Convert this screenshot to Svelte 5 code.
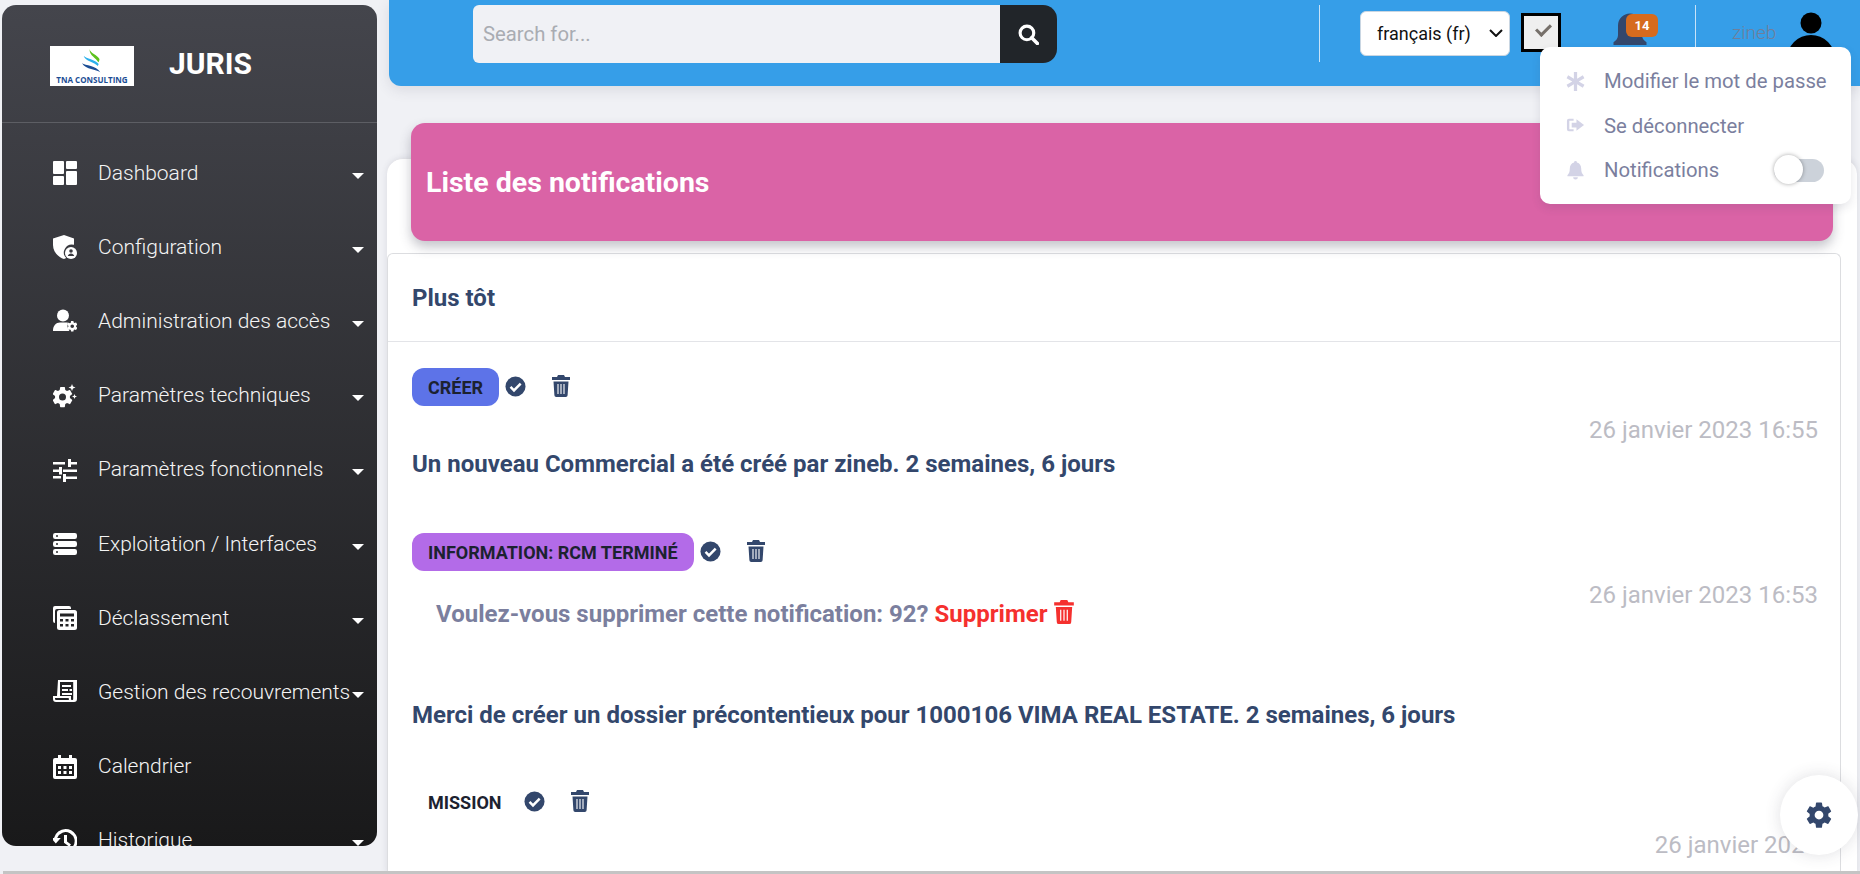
<script>
  const menu = [
    { label: "Dashboard", icon: "dashboard", caret: true },
    { label: "Configuration", icon: "shield", caret: true },
    { label: "Administration des accès", icon: "usercog", caret: true },
    { label: "Paramètres techniques", icon: "gears", caret: true },
    { label: "Paramètres fonctionnels", icon: "tune", caret: true },
    { label: "Exploitation / Interfaces", icon: "server", caret: true },
    { label: "Déclassement", icon: "calc", caret: true },
    { label: "Gestion des recouvrements", icon: "receipt", caret: true },
    { label: "Calendrier", icon: "calendar", caret: false },
    { label: "Historique", icon: "history", caret: true }
  ];

  const gear =
    "M19.4 13c.04-.33.06-.66.06-1s-.02-.67-.07-1l2.15-1.66c.2-.15.25-.42.12-.64l-2.03-3.5c-.12-.22-.39-.3-.61-.22l-2.53 1.02c-.53-.4-1.1-.74-1.72-.99l-.38-2.68A.5.5 0 0 0 13.9 2h-3.8a.5.5 0 0 0-.5.43l-.38 2.68c-.62.25-1.19.6-1.72.99L4.97 5.08c-.22-.09-.49 0-.61.22L2.33 8.8c-.13.22-.07.49.12.64L4.6 11.1c-.05.33-.08.67-.08.99s.02.67.07 1l-2.15 1.66c-.2.15-.25.42-.12.64l2.03 3.5c.12.22.39.3.61.22l2.53-1.02c.53.4 1.1.74 1.72.99l.38 2.68c.05.24.26.43.5.43h3.8c.24 0 .45-.19.5-.43l.38-2.68c.62-.25 1.19-.6 1.72-.99l2.53 1.02c.22.09.49 0 .61-.22l2.03-3.5c.13-.22.07-.49-.12-.64L19.4 13zM12 15.5a3.5 3.5 0 1 1 0-7 3.5 3.5 0 0 1 0 7z";
</script>

{#snippet trash(cls)}
  <svg class="trash {cls}" viewBox="0 0 18 22" aria-hidden="true">
    <path d="M6 0h6l1 2h5v3H0V2h5zM1.500 6.500h15L15.600 20.300A1.800 1.800 0 0 1 13.800 22H4.200a1.800 1.800 0 0 1-1.800-1.700z" fill="currentColor" />
    <path d="M6 9v10M9 9v10M12 9v10" stroke="#fff" stroke-width="1.100" />
  </svg>
{/snippet}

{#snippet check()}
  <svg class="check" viewBox="0 0 22 22" aria-hidden="true">
    <circle cx="11" cy="11" r="10.500" fill="#33476c" />
    <path d="M5.800 11.500l3.600 3.600 7-7.200" fill="none" stroke="#fff" stroke-width="2.600" />
  </svg>
{/snippet}

{#snippet menuIcon(name)}
  <svg class="micon" viewBox="0 0 24 24" fill="#fff" aria-hidden="true">
    {#if name === "dashboard"}
      <rect x="0" y="0" width="11" height="13" rx="1" /><rect x="13" y="0" width="11" height="8" rx="1" /><rect x="0" y="15" width="11" height="9" rx="1" /><rect x="13" y="10" width="11" height="14" rx="1" />
    {:else if name === "shield"}
      <path d="M11 0l10 3.600v6.200a8 8 0 0 0-7.800 13.300L11 24C5 22 0 17 0 10V3.600z" />
      <circle cx="18" cy="18" r="6" />
      <circle cx="18" cy="16" r="1.800" fill="#3a3a40" />
      <path d="M14.800 21c.4-1.800 1.700-2.600 3.200-2.600s2.800.8 3.200 2.600z" fill="#3a3a40" />
    {:else if name === "usercog"}
      <circle cx="10" cy="6.500" r="6" />
      <path d="M0 22c0-5.500 3-8.500 7-8.500h6c.8 0 1.400.1 2 .3-.6 1.200-.8 2.600-.5 3.900.2 1.600 1 3 2 4.300z" />
      <g transform="translate(13 11) scale(.52)"><path d={gear} /></g>
    {:else if name === "gears"}
      <g transform="translate(-2.500 1) scale(1)"><path d={gear} /></g>
      <path d="M19 0l1 2.500 2.500 1-2.500 1-1 2.500-1-2.500-2.500-1 2.500-1zM21.500 10l.7 1.800 1.800.7-1.800.7-.7 1.800-.7-1.800-1.800-.7 1.800-.7z" />
    {:else if name === "tune"}
      <path d="M0 18h8v2.500H0zM0 4h12v2.500H0zM13 24v-3h11v-2.500H13V16h-3v8zM6 9v2.500H0V14h6v2.500h3V9zM24 14v-2.500H10V14zM15 9h3V6.500h6V4h-6V1h-3z" />
    {:else if name === "server"}
      <rect x="0" y="1" width="24" height="6" rx="2.200" /><rect x="0" y="9" width="24" height="6" rx="2.200" /><rect x="0" y="17" width="24" height="6" rx="2.200" />
      <circle cx="4" cy="4" r="1" fill="#2b2b2e" /><circle cx="4" cy="12" r="1" fill="#2b2b2e" /><circle cx="4" cy="20" r="1" fill="#2b2b2e" />
    {:else if name === "calc"}
      <path d="M2 0h14a2 2 0 0 1 2 2v1H4a2 2 0 0 0-2 2v12H2a2 2 0 0 1-2-2V2a2 2 0 0 1 2-2z" />
      <rect x="4" y="4" width="20" height="20" rx="2.500" />
      <rect x="7" y="7.500" width="14" height="3" fill="#242426" />
      <g fill="#242426"><rect x="7" y="13" width="3" height="2.500" /><rect x="12.500" y="13" width="3" height="2.500" /><rect x="18" y="13" width="3" height="2.500" /><rect x="7" y="18" width="3" height="2.500" /><rect x="12.500" y="18" width="3" height="2.500" /><rect x="18" y="18" width="3" height="2.500" /></g>
    {:else if name === "receipt"}
      <path d="M5 0h19v19a3 3 0 0 1-3 3H3a3 3 0 0 1-3-3v-3h4zM7 2v14h11v3a1 1 0 0 0 1.200 1c.5 0 1-.4 1-1V2zM2 18v1a1.200 1.200 0 0 0 1 1h13a3 3 0 0 1-.2-2z" fill-rule="evenodd" />
      <path d="M9 5h9v2H9zM9 9h6v2H9zM16.500 9H19v2h-2.500zM9 13h10v2H9z" />
    {:else if name === "calendar"}
      <path d="M5 0h3v3h8V0h3v3h3a2 2 0 0 1 2 2v17a2 2 0 0 1-2 2H2a2 2 0 0 1-2-2V5a2 2 0 0 1 2-2h3zM3 9v12h18V9z" fill-rule="evenodd" />
      <path d="M5 11h3v3H5zM10.500 11h3v3h-3zM16 11h3v3h-3zM5 16h3v3H5zM10.500 16h3v3h-3zM16 16h3v3h-3z" />
    {:else if name === "history"}
      <path d="M12.500 0A12 12 0 1 1 4.400 20.800l2-2.200a9 9 0 1 0-2.200-9.600h3.600l-5 5.500L-2 9h3a12 12 0 0 1 11.500-9z" />
      <path d="M11 6h3v6.500l4 3-1.700 2.200-5.300-4z" />
    {/if}
  </svg>
{/snippet}

<div class="page">
  <aside class="sidebar">
    <div class="brand">
      <div class="logo">
        <svg class="leaf" viewBox="0 0 24 30" aria-hidden="true">
          <path d="M9 0c1 5 9 7 12 12-.2 2-.5 3-1.500 4C17 10 9 9 9 0z" fill="#5cc21e" />
          <path d="M2 8c3 4 14 4 18 10l-1 2.500C15 15 4 15 2 8z" fill="#2cb1ec" />
          <path d="M0 17c4 3 17 2 22 11-5-4-17-3-22-11z" fill="#1b4d94" />
        </svg>
        <span class="logo-text">TNA CONSULTING</span>
      </div>
      <span class="brand-name">JURIS</span>
    </div>
    <nav class="menu">
      {#each menu as item}
        <div class="menu-item">
          {@render menuIcon(item.icon)}
          <span class="menu-label">{item.label}</span>
          {#if item.caret}<span class="caret"></span>{/if}
        </div>
      {/each}
    </nav>
  </aside>

  <div class="main">
    <header class="topbar">
      <div class="search">
        <input type="text" placeholder="Search for..." />
        <button class="search-btn" aria-label="Rechercher">
          <svg viewBox="0 0 20 20" width="21" height="21" aria-hidden="true">
            <circle cx="8.500" cy="8.500" r="6.500" fill="none" stroke="#fff" stroke-width="3" />
            <path d="M13 13l5.500 5.500" stroke="#fff" stroke-width="3.400" stroke-linecap="round" />
          </svg>
        </button>
      </div>
      <span class="vline first"></span>
      <div class="lang-wrap">
        <select class="lang"><option>français (fr)</option></select>
        <svg class="chevron" viewBox="0 0 14 8" aria-hidden="true"><path d="M1 1l6 6 6-6" fill="none" stroke="#111" stroke-width="2" /></svg>
      </div>
      <input class="box" type="checkbox" checked />
      <div class="bell">
        <svg viewBox="0 0 24 24" width="36" height="36" aria-hidden="true">
          <path d="M12 1a8 8 0 0 0-8 8v6.500c0 2-1.200 3.500-3 4.700V22h22v-1.800c-1.800-1.200-3-2.700-3-4.700V9a8 8 0 0 0-8-8z" fill="#33476c" />
        </svg>
        <span class="badge">14</span>
      </div>
      <span class="vline"></span>
      <span class="user">zineb</span>
      <svg class="avatar" viewBox="0 0 48 74" aria-hidden="true">
        <circle cx="24" cy="11" r="10.500" fill="#000" />
        <ellipse cx="24" cy="47" rx="24" ry="24" fill="#000" />
      </svg>
    </header>

    <div class="outer">
      <div class="banner"><h1>Liste des notifications</h1></div>
      <section class="card">
        <h2 class="card-head">Plus tôt</h2>
        <div class="notif n1">
          <div class="tags">
            <span class="tag blue">CRÉER</span>
            {@render check()}
            {@render trash("")}
          </div>
          <div class="date">26 janvier 2023 16:55</div>
          <p class="msg">Un nouveau Commercial a été créé par zineb. 2 semaines, 6 jours</p>
        </div>
        <div class="notif n2">
          <div class="tags">
            <span class="tag purple">INFORMATION: RCM TERMINÉ</span>
            {@render check()}
            {@render trash("")}
          </div>
          <div class="date">26 janvier 2023 16:53</div>
          <p class="confirm">Voulez-vous supprimer cette notification: 92? <span class="red">Supprimer</span> {@render trash("red")}</p>
          <p class="msg">Merci de créer un dossier précontentieux pour 1000106 VIMA REAL ESTATE. 2 semaines, 6 jours</p>
        </div>
        <div class="notif n3">
          <div class="tags">
            <span class="tag plain">MISSION</span>
            {@render check()}
            {@render trash("")}
          </div>
          <div class="date">26 janvier 2023</div>
          <p class="msg">Merci de créer un dossier précontentieux pour 1000107 VIMA REAL ESTATE. 2 semaines, 6 jours</p>
        </div>
      </section>
    </div>
  </div>

  <!-- user dropdown, lies over the header and banner -->
  <div class="dropdown">
    <div class="dd-row">
      <svg class="dd-icon" viewBox="0 0 20 20" aria-hidden="true"><path d="M8.300 0h3.400v7l6-3.500 1.700 3L13.400 10l6 3.500-1.700 3-6-3.500v7H8.300v-7l-6 3.500-1.700-3L6.600 10l-6-3.500 1.700-3 6 3.500z" /></svg>
      <span>Modifier le mot de passe</span>
    </div>
    <div class="dd-row">
      <svg class="dd-icon" viewBox="0 0 20 20" aria-hidden="true"><path d="M8 3H3a2 2 0 0 0-2 2v9a2 2 0 0 0 2 2h5v-2H3.500V5H8z" /><path d="M11 3.500l8 6-8 6V12H6V7h5z" /></svg>
      <span>Se déconnecter</span>
    </div>
    <div class="dd-row">
      <svg class="dd-icon" viewBox="0 0 20 20" aria-hidden="true"><path d="M10 0a1.500 1.500 0 0 1 1.500 1.600C14.500 2.300 16 5 16 8c0 4 1 5.500 2.500 7v1h-17v-1C3 13.500 4 12 4 8c0-3 1.500-5.700 4.500-6.400A1.500 1.500 0 0 1 10 0zM7.500 17h5a2.500 2.500 0 0 1-5 0z" /></svg>
      <span>Notifications</span>
      <span class="switch"><span class="knob"></span></span>
    </div>
  </div>

  <button class="settings" aria-label="Paramètres">
    <svg viewBox="0 0 24 24" width="30" height="30" fill="#33476c" aria-hidden="true"><path d={gear} /></svg>
  </button>

  <div class="hbar"></div>
</div>

<style>
  :global(body) {
    margin: 0;
    background: #f0f1f5;
    font-family: Roboto, "Liberation Sans", sans-serif;
  }
  .page {
    position: relative;
    display: flex;
    height: 874px;
    overflow: hidden;
    background: #f0f1f5;
  }
  .sidebar {
    flex: 0 0 375px;
    height: 841px;
    margin: 5px 12px 0 2px;
    border-radius: 14px;
    overflow: hidden;
    background: linear-gradient(180deg, #44454c 0%, #19191a 100%);
    color: #fff;
  }
  .brand {
    display: flex;
    align-items: center;
    gap: 35px;
    height: 118px;
    padding-left: 48px;
    border-bottom: 1px solid #5d5e64;
    box-sizing: border-box;
  }
  .logo {
    display: flex;
    flex-direction: column;
    align-items: center;
    justify-content: flex-end;
    width: 84px;
    height: 40px;
    background: #fff;
    margin-top: 4px;
  }
  .leaf {
    width: 22px;
    height: 25px;
  }
  .logo-text {
    font: 700 8px/12px "Open Sans", sans-serif;
    color: #1b4d94;
    white-space: nowrap;
  }
  .brand-name {
    font-size: 30px;
    font-weight: 700;
  }
  .menu {
    padding-top: 13px;
  }
  .menu-item {
    display: flex;
    align-items: center;
    height: 74.200px;
    padding-left: 51px;
    padding-right: 13px;
    box-sizing: border-box;
  }
  .micon {
    flex: 0 0 auto;
    width: 24px;
    height: 24px;
  }
  .menu-label {
    margin-left: 21px;
    font-size: 21px;
    font-weight: 300;
    color: #f4f4f4;
    white-space: nowrap;
    margin-top: -1px;
  }
  .caret {
    margin-left: auto;
    margin-top: 5px;
    border-left: 6px solid transparent;
    border-right: 6px solid transparent;
    border-top: 6px solid #fff;
  }
  .main {
    flex: 1;
    min-width: 0;
  }
  .topbar {
    display: flex;
    align-items: flex-start;
    height: 86px;
    padding-left: 84px;
    background: #369ee8;
    border-bottom-left-radius: 12px;
    box-sizing: border-box;
    box-shadow: 0 4px 14px rgba(60, 60, 80, 0.12);
  }
  .search {
    display: flex;
    width: 584px;
    height: 58px;
    margin-top: 5px;
  }
  .search input {
    flex: 1;
    min-width: 0;
    border: 0;
    padding: 0 10px;
    font: 400 20.300px Roboto, sans-serif;
    background: #f0f1f5;
    border-radius: 6px 0 0 6px;
  }
  .search input::placeholder {
    color: #a9acb2;
  }
  .search-btn {
    flex: 0 0 57px;
    display: flex;
    align-items: center;
    justify-content: center;
    border: 0;
    padding: 0;
    background: #212529;
    border-radius: 0 14px 14px 0;
  }
  .vline {
    width: 1px;
    height: 57px;
    margin-top: 5px;
    background: #c8e3f8;
  }
  .vline.first {
    margin-left: 262px;
  }
  .lang-wrap {
    position: relative;
    width: 150px;
    height: 45px;
    margin: 11px 0 0 40px;
  }
  .lang {
    appearance: none;
    width: 100%;
    height: 100%;
    padding: 0 16px;
    font: 400 18px Roboto, sans-serif;
    color: #111;
    background: #fff;
    border: 1px solid #c9d6e2;
    border-radius: 6px;
  }
  .chevron {
    position: absolute;
    right: 7px;
    top: 18px;
    width: 14px;
    height: 8px;
    pointer-events: none;
  }
  .box {
    appearance: none;
    position: relative;
    width: 40px;
    height: 39px;
    margin: 13px 0 0 11px;
    border: 3px solid #000;
    background: #efefef;
    box-sizing: border-box;
  }
  .box::after {
    content: "";
    position: absolute;
    left: 12px;
    top: 8px;
    width: 12px;
    height: 6px;
    border-left: 3px solid #76706a;
    border-bottom: 3px solid #76706a;
    transform: rotate(-45deg);
  }
  .bell {
    position: relative;
    width: 36px;
    height: 36px;
    margin: 12px 0 0 51px;
  }
  .badge {
    position: absolute;
    left: 14px;
    top: 2px;
    width: 32px;
    height: 23px;
    border-radius: 6px;
    background: #d66b1e;
    color: #fff;
    font-size: 13px;
    font-weight: 700;
    line-height: 23px;
    text-align: center;
  }
  .vline:not(.first) {
    margin-left: 47px;
  }
  .user {
    margin: 21px 0 0 36px;
    font-size: 19px;
    color: #6f7f9b;
    font-weight: 300;
  }
  .avatar {
    width: 48px;
    height: 74px;
    margin: 12px 0 0 11px;
  }
  .outer {
    position: relative;
    margin: 72px 3px 0 -2px;
    padding-top: 1px;
    background: #fff;
    border-radius: 16px 16px 0 0;
    border-top: 1px solid #e4e4e8;
    box-shadow: 0 0 6px rgba(60, 60, 80, 0.12);
    height: 716px;
    box-sizing: border-box;
  }
  .banner {
    position: relative;
    display: flex;
    align-items: center;
    height: 118px;
    margin: -37px 24px 0 24px;
    padding-left: 15px;
    background: #da63a6;
    border-radius: 14px;
    box-shadow: 0 6px 12px rgba(60, 60, 80, 0.3);
  }
  .banner h1 {
    margin: 0;
    color: #fff;
    font-size: 28.500px;
    font-weight: 700;
  }
  .card {
    margin: 12px 16px 0 0;
    background: #fff;
    border: 1px solid #dcdde0;
    border-radius: 6px 6px 0 0;
    border-bottom: 0;
    box-sizing: border-box;
  }
  .card-head {
    margin: 0;
    height: 88px;
    padding-left: 24px;
    display: flex;
    align-items: center;
    font-size: 24px;
    font-weight: 700;
    color: #33476c;
    border-bottom: 1px solid #e3e4e8;
    box-sizing: border-box;
  }
  .notif {
    padding: 0 22px 0 24px;
    box-sizing: border-box;
  }
  .n1 { padding-top: 26px; height: 191px; }
  .n2 { height: 250px; }
  .tags {
    display: flex;
    align-items: center;
    height: 38px;
  }
  .tag {
    display: flex;
    align-items: center;
    height: 38px;
    padding: 0 16px;
    border-radius: 12px;
    font-size: 18px;
    font-weight: 700;
    color: #1c2230;
  }
  .blue { background: #5d73e8; }
  .purple { background: #b36be8; }
  .plain { background: transparent; }
  .check {
    width: 21px;
    height: 21px;
    margin: -2px 0 0 6px;
  }
  .trash {
    width: 18px;
    height: 22px;
    margin: -2px 0 0 26px;
    color: #33476c;
  }
  .trash.red {
    color: #f5302e;
    margin: 0 0 0 1px;
    vertical-align: -2px;
    width: 20px;
    height: 24px;
  }
  .date {
    text-align: right;
    font-size: 24px;
    font-weight: 400;
    color: #bcbcc4;
    line-height: 26px;
    margin: 11px 0 0;
  }
  .msg {
    margin: 6px 0 0;
    font-size: 24px;
    font-weight: 700;
    color: #33476c;
    line-height: 30px;
  }
  .confirm {
    margin: -9px 0 0 24px;
    font-size: 24px;
    font-weight: 700;
    color: #7b7f9e;
    line-height: 30px;
  }
  .n2 .msg {
    margin-top: 71px;
  }
  .n3 .msg {
    margin-top: 8px;
  }
  .red {
    color: #f5302e;
  }
  .dropdown {
    position: absolute;
    left: 1540px;
    top: 47px;
    width: 311px;
    height: 157px;
    padding: 12px 0 0 26px;
    box-sizing: border-box;
    background: #fff;
    border-radius: 10px;
    box-shadow: 0 4px 10px rgba(60, 60, 80, 0.12);
  }
  .dd-row {
    display: flex;
    align-items: center;
    height: 44.500px;
    font-size: 20.300px;
    color: #7b7f9e;
  }
  .dd-icon {
    width: 19px;
    height: 19px;
    margin-right: 19px;
    fill: #d3d3e6;
  }
  .switch {
    position: relative;
    width: 50px;
    height: 23px;
    margin-left: 55px;
    border-radius: 12px;
    background: #ccd2da;
  }
  .knob {
    position: absolute;
    left: 0;
    top: -4px;
    width: 29px;
    height: 29px;
    border-radius: 50%;
    background: #fff;
    box-shadow: 0 0 4px rgba(0, 0, 0, 0.35);
  }
  .settings {
    position: absolute;
    left: 1780px;
    top: 775px;
    width: 78px;
    height: 80px;
    border: 0;
    border-radius: 50%;
    background: #fff;
    box-shadow: 0 0 16px rgba(60, 60, 80, 0.16);
    display: flex;
    align-items: center;
    justify-content: center;
    padding: 0;
  }
  .hbar {
    position: absolute;
    left: 3px;
    right: 0;
    bottom: 0;
    height: 3px;
    background: #c4c4c4;
  }
</style>
